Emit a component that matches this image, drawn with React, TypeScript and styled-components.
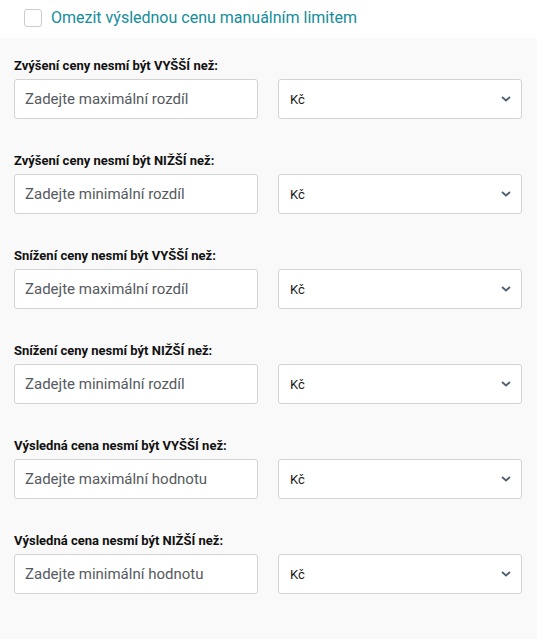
import * as React from 'react';
import styled, { createGlobalStyle } from 'styled-components';

const GlobalStyle = createGlobalStyle`
  html, body {
    margin: 0;
    padding: 0;
    background: #ffffff;
    font-family: Roboto, "Noto Sans", Arial, sans-serif;
  }
`;

const Page = styled.div`
  width: 537px;
  height: 639px;
  display: flex;
  flex-direction: column;
  overflow: hidden;
`;

const TopBar = styled.label`
  height: 38px;
  display: flex;
  align-items: center;
  gap: 9px;
  padding-left: 24px;
  background: #ffffff;
  box-sizing: border-box;
  padding-bottom: 3px;
`;

const CheckBox = styled.span`
  width: 16px;
  height: 16px;
  border: 1px solid #cccccc;
  border-radius: 3px;
  background: #fff;
`;

const CheckText = styled.span`
  font-size: 16px;
  color: #138d9b;
`;

const Body = styled.div`
  flex: 1;
  background: #f9f9f9;
  padding: 20px 15px 0 14px;
  display: flex;
  flex-direction: column;
  gap: 34px;
`;

const Block = styled.div`
  display: flex;
  flex-direction: column;
  gap: 6px;
`;

const Label = styled.div`
  font-size: 13px;
  font-weight: 700;
  color: #111;
  line-height: 15px;
`;

const Row = styled.div`
  display: grid;
  grid-template-columns: 1fr 1fr;
  column-gap: 20px;
`;

const Field = styled.div`
  height: 40px;
  box-sizing: border-box;
  border: 1px solid #d3d3d3;
  border-radius: 3px;
  background: #fff;
  display: flex;
  align-items: center;
  padding: 0 10px;
`;

const Placeholder = styled.span`
  font-size: 15px;
  color: #555a60;
`;

const SelectBox = styled(Field)`
  justify-content: space-between;
  padding: 0 10px 0 11px;
`;

const SelectValue = styled.span`
  font-size: 13px;
  color: #1a1a1a;
`;

const Chevron = () => (
  <svg width="10" height="6" viewBox="0 0 10 6">
    <path d="M1 1l4 3.5L9 1" fill="none" stroke="#4f6070" strokeWidth="1.8" />
  </svg>
);

const rows = [
  ['Zvýšení ceny nesmí být VYŠŠÍ než:', 'Zadejte maximální rozdíl'],
  ['Zvýšení ceny nesmí být NIŽŠÍ než:', 'Zadejte minimální rozdíl'],
  ['Snížení ceny nesmí být VYŠŠÍ než:', 'Zadejte maximální rozdíl'],
  ['Snížení ceny nesmí být NIŽŠÍ než:', 'Zadejte minimální rozdíl'],
  ['Výsledná cena nesmí být VYŠŠÍ než:', 'Zadejte maximální hodnotu'],
  ['Výsledná cena nesmí být NIŽŠÍ než:', 'Zadejte minimální hodnotu'],
];

export default function App() {
  return (
    <>
      <GlobalStyle />
      <Page>
        <TopBar>
          <CheckBox />
          <CheckText>Omezit výslednou cenu manuálním limitem</CheckText>
        </TopBar>
        <Body>
          {rows.map(([label, ph]) => (
            <Block key={label}>
              <Label>{label}</Label>
              <Row>
                <Field>
                  <Placeholder>{ph}</Placeholder>
                </Field>
                <SelectBox>
                  <SelectValue>Kč</SelectValue>
                  <Chevron />
                </SelectBox>
              </Row>
            </Block>
          ))}
        </Body>
      </Page>
    </>
  );
}
